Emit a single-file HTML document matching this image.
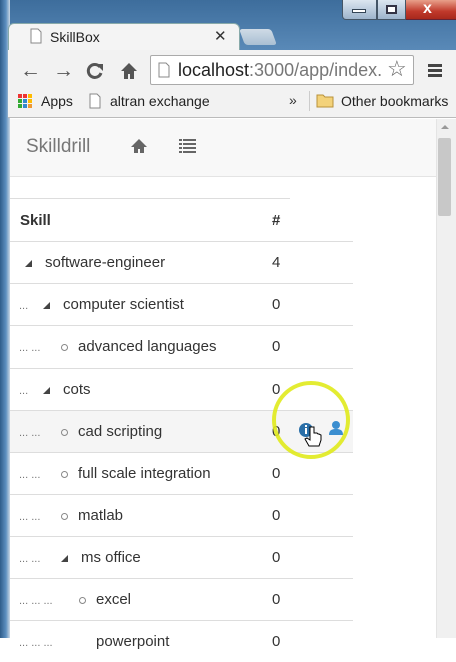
<!DOCTYPE html>
<html><head><meta charset="utf-8"><style>
*{margin:0;padding:0;box-sizing:border-box}
body{width:456px;height:638px;overflow:hidden;position:relative;font-family:"Liberation Sans",Arial,sans-serif;background:#fff}
.abs{position:absolute}
.row{position:absolute;left:10px;width:343px;height:42px;border-top:1px solid #ddd;font-size:15px;color:#333}
.row span{position:absolute;top:12px;white-space:nowrap}
.dots{color:#777;font-size:11px;letter-spacing:0}
.tri{width:0;height:0;border-left:7px solid transparent;border-bottom:7px solid #444;position:absolute;top:18px}
.circ{width:7px;height:7px;border:1px solid #888;border-radius:50%;position:absolute;top:18px}
.num{left:262px}
</style></head><body>
<!-- window frame -->
<div class="abs" style="left:0;top:0;width:456px;height:60px;background:linear-gradient(#3d6d9c,#5f8fbd)"></div>
<div class="abs" style="left:0;top:0;width:10px;height:638px;background:linear-gradient(90deg,#2e5c8a,#5d8fc0 60%,#c9d6e3)"></div>
<!-- window buttons -->
<div class="abs" style="left:342px;top:0;width:35px;height:20px;background:linear-gradient(#dce6f0,#9db4cc);border:1px solid #456;border-top:none;border-radius:0 0 0 4px"></div>
<div class="abs" style="left:352px;top:9px;width:14px;height:4px;background:#fff;border:1px solid #345"></div>
<div class="abs" style="left:377px;top:0;width:29px;height:20px;background:linear-gradient(#dce6f0,#9db4cc);border:1px solid #456;border-top:none"></div>
<div class="abs" style="left:386px;top:5px;width:11px;height:9px;border:2px solid #334;background:#fff"></div>
<div class="abs" style="left:406px;top:0;width:50px;height:20px;background:linear-gradient(#e8a08a,#c0392b 60%,#a8281c);border-bottom:1px solid #623"></div>
<div class="abs" style="left:423px;top:0px;color:#fff;font-weight:bold;font-size:16px">x</div>
<!-- tabs -->
<div class="abs" style="left:8px;top:23px;width:232px;height:30px;background:#f4f4f4;border-radius:6px 6px 0 0;border:1px solid #8aa"></div>
<svg class="abs" style="left:30px;top:28px" width="12" height="16"><path d="M1 1h7l3 3v11H1z" fill="#fff" stroke="#888"/></svg>
<div class="abs" style="left:50px;top:29px;font-size:14px;color:#222">SkillBox</div>
<div class="abs" style="left:214px;top:27px;font-size:15px;color:#333">✕</div>
<div class="abs" style="left:242px;top:29px;width:32px;height:16px;background:linear-gradient(#cfdbe6,#a9bfd3);transform:skewX(20deg);border-radius:3px"></div>
<!-- toolbar -->
<div class="abs" style="left:8px;top:50px;width:448px;height:68px;background:#f2f2f2;border-bottom:1px solid #bbb"></div>
<div class="abs" style="left:20px;top:59px;font-size:21px;color:#555;font-weight:bold">&#8592;</div>
<div class="abs" style="left:53px;top:59px;font-size:21px;color:#555;font-weight:bold">&#8594;</div>
<svg class="abs" style="left:86px;top:62px" width="18" height="18"><path d="M14 5A6.5 6.5 0 1 0 15 11" fill="none" stroke="#555" stroke-width="3"/><path d="M10 2l7 0 0 7z" fill="#555"/></svg>
<svg class="abs" style="left:120px;top:61px" width="18" height="19"><path d="M9 2L1 10h3v8h4v-5h2v5h4v-8h3z" fill="#555"/></svg>
<div class="abs" style="left:150px;top:55px;width:264px;height:30px;background:#fff;border:1px solid #aaa;border-radius:2px"></div>
<svg class="abs" style="left:158px;top:62px" width="12" height="16"><path d="M1 1h7l3 3v11H1z" fill="#fff" stroke="#888"/></svg>
<div class="abs" style="left:178px;top:60px;font-size:18px;color:#222;white-space:nowrap;width:205px;overflow:hidden">localhost<span style="color:#777">:3000/app/index.h</span></div>
<div class="abs" style="left:387px;top:56px;font-size:22px;color:#666">☆</div>
<div class="abs" style="left:428px;top:64px;width:14px;height:3px;background:#444;box-shadow:0 5px 0 #444,0 10px 0 #444"></div>
<!-- bookmarks -->
<svg class="abs" style="left:18px;top:94px" width="15" height="15"><g><rect x="0" y="0" width="4" height="4" fill="#e33"/><rect x="5" y="0" width="4" height="4" fill="#e33"/><rect x="10" y="0" width="4" height="4" fill="#fb0"/><rect x="0" y="5" width="4" height="4" fill="#3a3"/><rect x="5" y="5" width="4" height="4" fill="#38c"/><rect x="10" y="5" width="4" height="4" fill="#fb0"/><rect x="0" y="10" width="4" height="4" fill="#3a3"/><rect x="5" y="10" width="4" height="4" fill="#38c"/><rect x="10" y="10" width="4" height="4" fill="#e93"/></g></svg>
<div class="abs" style="left:41px;top:93px;font-size:14px;color:#222">Apps</div>
<svg class="abs" style="left:89px;top:93px" width="12" height="16"><path d="M1 1h7l3 3v11H1z" fill="#fff" stroke="#888"/></svg>
<div class="abs" style="left:110px;top:93px;font-size:14px;color:#222">altran exchange</div>
<div class="abs" style="left:289px;top:92px;font-size:14px;color:#333">»</div>
<div class="abs" style="left:309px;top:91px;width:1px;height:20px;background:#ccc"></div>
<svg class="abs" style="left:316px;top:93px" width="18" height="15"><path d="M1 2h6l2 2h8v10H1z" fill="#f3d27a" stroke="#b8913a"/></svg>
<div class="abs" style="left:341px;top:93px;font-size:14px;color:#222">Other bookmarks</div>
<!-- content header -->
<div class="abs" style="left:10px;top:119px;width:426px;height:58px;background:#f8f8f8;border-bottom:1px solid #e4e4e4"></div>
<div class="abs" style="left:26px;top:136px;font-size:19px;color:#777">Skilldrill</div>
<svg class="abs" style="left:130px;top:138px" width="18" height="16"><path d="M9 1L1 9h3v6h4v-4h2v4h4V9h3z" fill="#666"/></svg>
<svg class="abs" style="left:179px;top:139px" width="17" height="14"><g fill="#666"><rect x="0" y="0" width="3" height="2"/><rect x="4" y="0" width="13" height="2"/><rect x="0" y="4" width="3" height="2"/><rect x="4" y="4" width="13" height="2"/><rect x="0" y="8" width="3" height="2"/><rect x="4" y="8" width="13" height="2"/><rect x="0" y="12" width="3" height="2"/><rect x="4" y="12" width="13" height="2"/></g></svg>
<!-- scrollbar -->
<div class="abs" style="left:436px;top:119px;width:20px;height:519px;background:#f0f0f0;border-left:1px solid #e4e4e4"></div>
<div class="abs" style="left:441px;top:125px;width:0;height:0;border-left:4px solid transparent;border-right:4px solid transparent;border-bottom:4px solid #999"></div>
<div class="abs" style="left:438px;top:138px;width:13px;height:78px;background:#c8c8c8;border-radius:2px"></div>
<!-- table -->
<div class="abs" style="left:10px;top:198px;width:280px;height:1px;background:#ddd"></div>
<div class="abs" style="left:20px;top:212px;font-size:15px;font-weight:bold;color:#333">Skill</div>
<div class="abs" style="left:272px;top:212px;font-size:15px;font-weight:bold;color:#333">#</div>

<div class="row" style="top:241px"><i class="tri" style="left:15px"></i><span style="left:35px">software-engineer</span><span class="num">4</span></div>
<div class="row" style="top:283px"><span class="dots" style="left:9px;top:16px">...</span><i class="tri" style="left:33px"></i><span style="left:53px">computer scientist</span><span class="num">0</span></div>
<div class="row" style="top:325px"><span class="dots" style="left:9px;top:16px">... ...</span><i class="circ" style="left:51px"></i><span style="left:68px">advanced languages</span><span class="num">0</span></div>
<div class="row" style="top:368px"><span class="dots" style="left:9px;top:16px">...</span><i class="tri" style="left:33px"></i><span style="left:53px">cots</span><span class="num">0</span></div>
<div class="row" style="top:410px;background:#f5f5f5"><span class="dots" style="left:9px;top:16px">... ...</span><i class="circ" style="left:51px"></i><span style="left:68px">cad scripting</span><span class="num">0</span></div>
<div class="row" style="top:452px"><span class="dots" style="left:9px;top:16px">... ...</span><i class="circ" style="left:51px"></i><span style="left:68px">full scale integration</span><span class="num">0</span></div>
<div class="row" style="top:494px"><span class="dots" style="left:9px;top:16px">... ...</span><i class="circ" style="left:51px"></i><span style="left:68px">matlab</span><span class="num">0</span></div>
<div class="row" style="top:536px"><span class="dots" style="left:9px;top:16px">... ...</span><i class="tri" style="left:51px"></i><span style="left:71px">ms office</span><span class="num">0</span></div>
<div class="row" style="top:578px"><span class="dots" style="left:9px;top:16px">... ... ...</span><i class="circ" style="left:69px"></i><span style="left:86px">excel</span><span class="num">0</span></div>
<div class="row" style="top:620px"><span class="dots" style="left:9px;top:16px">... ... ...</span><span style="left:86px;top:12px">powerpoint</span><span class="num">0</span></div>

<!-- icons + highlight -->
<svg class="abs" style="left:270px;top:378px" width="90" height="90">
<circle cx="41" cy="42" r="37" fill="none" stroke="#e0ea1c" stroke-width="4" opacity="0.9"/>
<circle cx="36" cy="52" r="7" fill="#2a6fa8"/>
<rect x="35" y="50" width="2" height="6" fill="#fff"/><rect x="35" y="47" width="2" height="2" fill="#fff"/>
<circle cx="66" cy="47" r="4" fill="#3b8ed0"/><path d="M59 57c0-5 3-6 7-6s7 1 7 6z" fill="#3b8ed0"/>
<path d="M40 49v13l-3-2-2 1 4 7h10l2-6v-5l-2-1-1 0-1-1-2 0-1 0v-6z" fill="#fff" stroke="#000" stroke-width="1"/>
</svg>
</body></html>
